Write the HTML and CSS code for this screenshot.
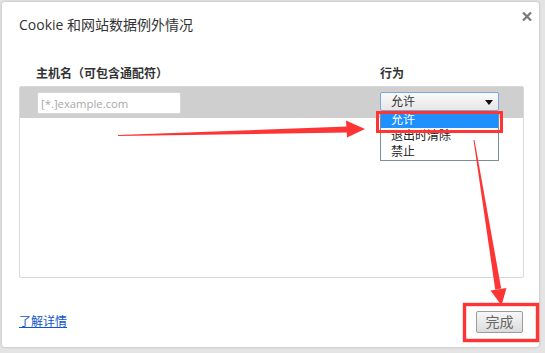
FILE: index.html
```html
<!DOCTYPE html>
<html lang="zh-CN">
<head>
<meta charset="utf-8">
<title>Cookie 和网站数据例外情况</title>
<link rel="stylesheet" href="styles.css">
</head>
<body>
<div class="backdrop">
  <div class="dialog">
    <div class="head">
      <h1 class="title">Cookie 和网站数据例外情况</h1>
      <svg class="close" width="10" height="9" viewBox="0 0 10 9"><path d="M1 0.5 L9 8.5 M9 0.5 L1 8.5" stroke="#7a7a7a" stroke-width="2.2" fill="none"/></svg>
    </div>
    <div class="cols">
      <span>主机名（可包含通配符）</span>
      <span>行为</span>
    </div>
    <div class="list">
      <div class="row">
        <input class="host" type="text" placeholder="[*.]example.com">
        <div class="select">允许<span class="caret"></span>
          <ul class="popup">
            <li class="on">允许</li>
            <li>退出时清除</li>
            <li>禁止</li>
          </ul>
        </div>
      </div>
    </div>
    <div class="foot">
      <a class="link" href="#">了解详情</a>
      <button class="done" type="button">完成</button>
    </div>
  </div>
</div>
<svg class="annot" width="545" height="353" viewBox="0 0 545 353">
  <g fill="#fd3535">
    <polygon points="118,135 347,126.5 347,132.5 118,136"/>
    <polygon points="346,120.5 365,129 347,137.5"/>
    <polygon points="473.5,140.1 474.5,139.9 501.2,288.5 495.2,289.5"/>
    <polygon points="490.5,290.5 506.5,288 501.5,305.5"/>
  </g>
  <g fill="none" stroke="#fd3535" stroke-width="3">
    <rect x="377.5" y="112.5" width="124" height="19"/>
    <rect x="464.5" y="304.5" width="73" height="36" stroke-width="3.4"/>
  </g>
</svg>
</body>
</html>
```
FILE: styles.css
```css
html, body {
  margin: 0;
  padding: 0;
}
body {
  width: 545px;
  height: 353px;
  overflow: hidden;
  position: relative;
  background: #e4e4e4;
  font-family: "Open Sans", "Noto Sans CJK SC", sans-serif;
  color: #333;
}
.backdrop {
  padding: 2px 0 0 2px;
  height: 353px;
  box-sizing: border-box;
}
.dialog {
  width: 537px;
  height: 345px;
  background: #fff;
  border-radius: 3px;
  box-shadow: 0 0 3px rgba(0, 0, 0, 0.22);
  display: flex;
  flex-direction: column;
  box-sizing: border-box;
}
.head {
  display: flex;
  justify-content: space-between;
  align-items: flex-start;
  padding: 13px 7px 0 17px;
}
.title {
  margin: 0;
  font-size: 14px;
  font-weight: normal;
  line-height: 20px;
  color: #333;
}
.close {
  display: block;
  margin-top: -3px;
}
.cols {
  display: grid;
  grid-template-columns: 344px auto;
  margin: 31px 15px 0 17px;
  padding-left: 17px;
  font-size: 12px;
  font-weight: bold;
  line-height: 16px;
  color: #333;
}
.list {
  margin: 4px 15px 0 17px;
  height: 192px;
  border: 1px solid #d9d9d9;
  border-radius: 2px;
  box-sizing: border-box;
}
.row {
  display: grid;
  grid-template-columns: 343px 119px;
  align-items: start;
  height: 31px;
  padding: 5px 0 0 17px;
  box-sizing: border-box;
  background: #cfcfcf;
}
.host {
  width: 144px;
  height: 22px;
  margin: 0;
  box-sizing: border-box;
  border: 1px solid #d6d6d6;
  border-radius: 2px;
  padding: 0 3px;
  background: #fff;
  font: 11.3px "Open Sans", "Noto Sans CJK SC", sans-serif;
  color: #333;
  outline: none;
}
.host::placeholder {
  color: #a8a8a8;
}
.select {
  position: relative;
  width: 119px;
  height: 19px;
  box-sizing: border-box;
  border: 1px solid #7aa7e0;
  border-radius: 2px;
  background: linear-gradient(#fafafa, #e6e6e6);
  padding-left: 10px;
  font-size: 12px;
  line-height: 17px;
  color: #333;
}
.caret {
  position: absolute;
  right: 5px;
  top: 6.5px;
  width: 0;
  height: 0;
  border-left: 4px solid transparent;
  border-right: 4px solid transparent;
  border-top: 5px solid #111;
}
.popup {
  position: absolute;
  left: -1px;
  top: 18px;
  width: 119px;
  margin: 0;
  padding: 0;
  list-style: none;
  box-sizing: border-box;
  border: 1px solid #7f8c99;
  background: #fff;
}
.popup li {
  height: 16px;
  line-height: 16px;
  padding-left: 10px;
  font-size: 12px;
  color: #222;
}
.popup li.on {
  background: #1e90ff;
  color: #fff;
}
.foot {
  margin-top: auto;
  display: flex;
  justify-content: space-between;
  align-items: center;
  padding: 0 16px 14px 17px;
}
.link {
  font-size: 12px;
  line-height: 16px;
  color: #1155cc;
  text-decoration: underline;
}
.done {
  width: 47px;
  height: 22px;
  margin: 0;
  padding: 0;
  box-sizing: border-box;
  border: 1px solid #9c9c9c;
  border-radius: 2px;
  background: linear-gradient(#f7f7f7, #dcdcdc);
  font: 14px/20px "Open Sans", "Noto Sans CJK SC", sans-serif;
  color: #666;
}
.annot {
  position: absolute;
  left: 0;
  top: 0;
  pointer-events: none;
}
```
